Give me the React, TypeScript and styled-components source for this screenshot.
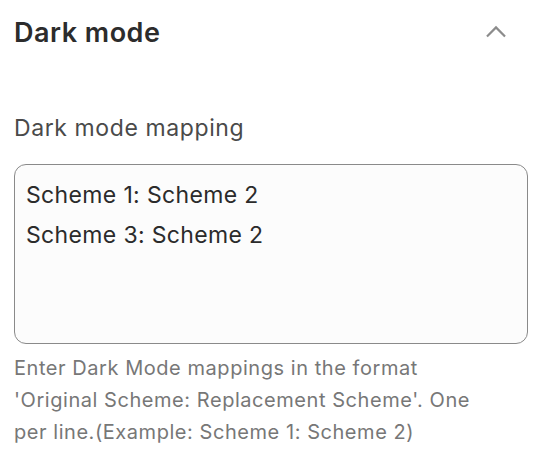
import React from "react";
import styled, { createGlobalStyle } from "styled-components";

const Global = createGlobalStyle`
  html, body { margin: 0; padding: 0; background: #ffffff; }
  body { font-family: Inter, "Noto Sans", sans-serif; -webkit-font-smoothing: antialiased; }
  * { box-sizing: border-box; }
`;

const Panel = styled.section`
  display: flex;
  flex-direction: column;
  padding: 0 20px 0 14px;
  width: 548px;
`;

const Header = styled.div`
  display: flex;
  align-items: center;
  justify-content: space-between;
  height: 64px;
`;

const Title = styled.h2`
  margin: 0;
  font-size: 27px;
  font-weight: 600;
  color: #2c2c2c;
  letter-spacing: 0.5px;
`;

const ToggleButton = styled.button`
  display: flex;
  align-items: center;
  justify-content: center;
  width: 32px;
  height: 32px;
  margin-right: 16px;
  padding: 0;
  border: none;
  background: transparent;
  color: #8c8c8c;
  cursor: pointer;
`;

const Field = styled.div`
  display: flex;
  flex-direction: column;
  margin-top: 50px;
`;

const Label = styled.label`
  font-size: 23px;
  letter-spacing: 0.6px;
  color: #4a4a4a;
  line-height: normal;
  margin-bottom: 22px;
`;

const TextArea = styled.textarea`
  display: block;
  width: 100%;
  height: 180px;
  padding: 10px 11px;
  border: 1px solid #8a8a8a;
  border-radius: 12px;
  background: #fcfcfc;
  font-family: Inter, "Noto Sans", sans-serif;
  font-size: 23px;
  letter-spacing: 0.35px;
  line-height: 40px;
  color: #2b2b2b;
  resize: none;
  outline: none;
`;

const Helper = styled.p`
  margin: 8px 0 0;
  padding-right: 40px;
  font-size: 20px;
  letter-spacing: 0.55px;
  line-height: 32px;
  color: #777777;
`;

const ChevronUp = () => (
  <svg width="22" height="22" viewBox="0 0 24 24" fill="none" stroke="currentColor" strokeWidth="2.4" strokeLinecap="square" strokeLinejoin="miter">
    <path d="M3 16 L12 7 L21 16" />
  </svg>
);

export default function App() {
  return (
    <>
      <Global />
      <Panel>
        <Header>
          <Title>Dark mode</Title>
          <ToggleButton aria-label="Collapse">
            <ChevronUp />
          </ToggleButton>
        </Header>
        <Field>
          <Label htmlFor="dm">Dark mode mapping</Label>
          <TextArea id="dm" defaultValue={"Scheme 1: Scheme 2\nScheme 3: Scheme 2"} />
          <Helper>
            Enter Dark Mode mappings in the format 'Original Scheme: Replacement Scheme'. One per line.(Example: Scheme 1: Scheme 2)
          </Helper>
        </Field>
      </Panel>
    </>
  );
}
